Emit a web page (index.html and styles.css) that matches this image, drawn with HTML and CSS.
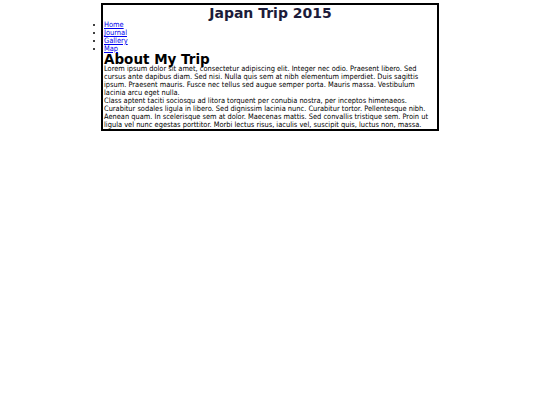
FILE: index.html
```html
<!DOCTYPE html>
<html>
<head>
<meta charset="utf-8">
<title>Japan Trip 2015</title>
<link rel="stylesheet" href="styles.css">
</head>
<body>
<div class="page">
  <h1 class="title">Japan Trip 2015</h1>
  <ul class="nav">
    <li><a href="#">Home</a></li>
    <li><a href="#">Journal</a></li>
    <li><a href="#">Gallery</a></li>
    <li><a href="#">Map</a></li>
  </ul>
  <h2 class="heading">About My Trip</h2>
  <p class="text">Lorem ipsum dolor sit amet, consectetur adipiscing elit. Integer nec odio. Praesent libero. Sed cursus ante dapibus diam. Sed nisi. Nulla quis sem at nibh elementum imperdiet. Duis sagittis ipsum. Praesent mauris. Fusce nec tellus sed augue semper porta. Mauris massa. Vestibulum lacinia arcu eget nulla.</p>
  <p class="text">Class aptent taciti sociosqu ad litora torquent per conubia nostra, per inceptos himenaeos. Curabitur sodales ligula in libero. Sed dignissim lacinia nunc. Curabitur tortor. Pellentesque nibh. Aenean quam. In scelerisque sem at dolor. Maecenas mattis. Sed convallis tristique sem. Proin ut ligula vel nunc egestas porttitor. Morbi lectus risus, iaculis vel, suscipit quis, luctus non, massa.</p>
</div>
</body>
</html>
```
FILE: styles.css
```css
html, body {
  margin: 0;
  padding: 0;
  background: #fff;
}
body {
  font-family: "DejaVu Sans Condensed", "DejaVu Sans", sans-serif;
  font-size: 7.4px;
  line-height: 8px;
  color: #000;
}
.page {
  width: 333px;
  margin: 3px auto 0;
  border: 2px solid #000;
  padding: 0 0 0 1px;
}
.title {
  margin: 0;
  text-align: center;
  font-family: "DejaVu Sans", sans-serif;
  font-size: 14px;
  line-height: 16px;
  color: #1c1c3a;
}
.nav {
  margin: 0;
  padding: 0;
  list-style: disc;
}
.nav li {
  line-height: 8px;
}
.nav a {
  color: #0000ee;
}
.heading {
  margin: 0;
  font-family: "DejaVu Sans", sans-serif;
  font-size: 13.5px;
  line-height: 12px;
  padding-bottom: 0;
}
.text {
  margin: 0;
}
```
